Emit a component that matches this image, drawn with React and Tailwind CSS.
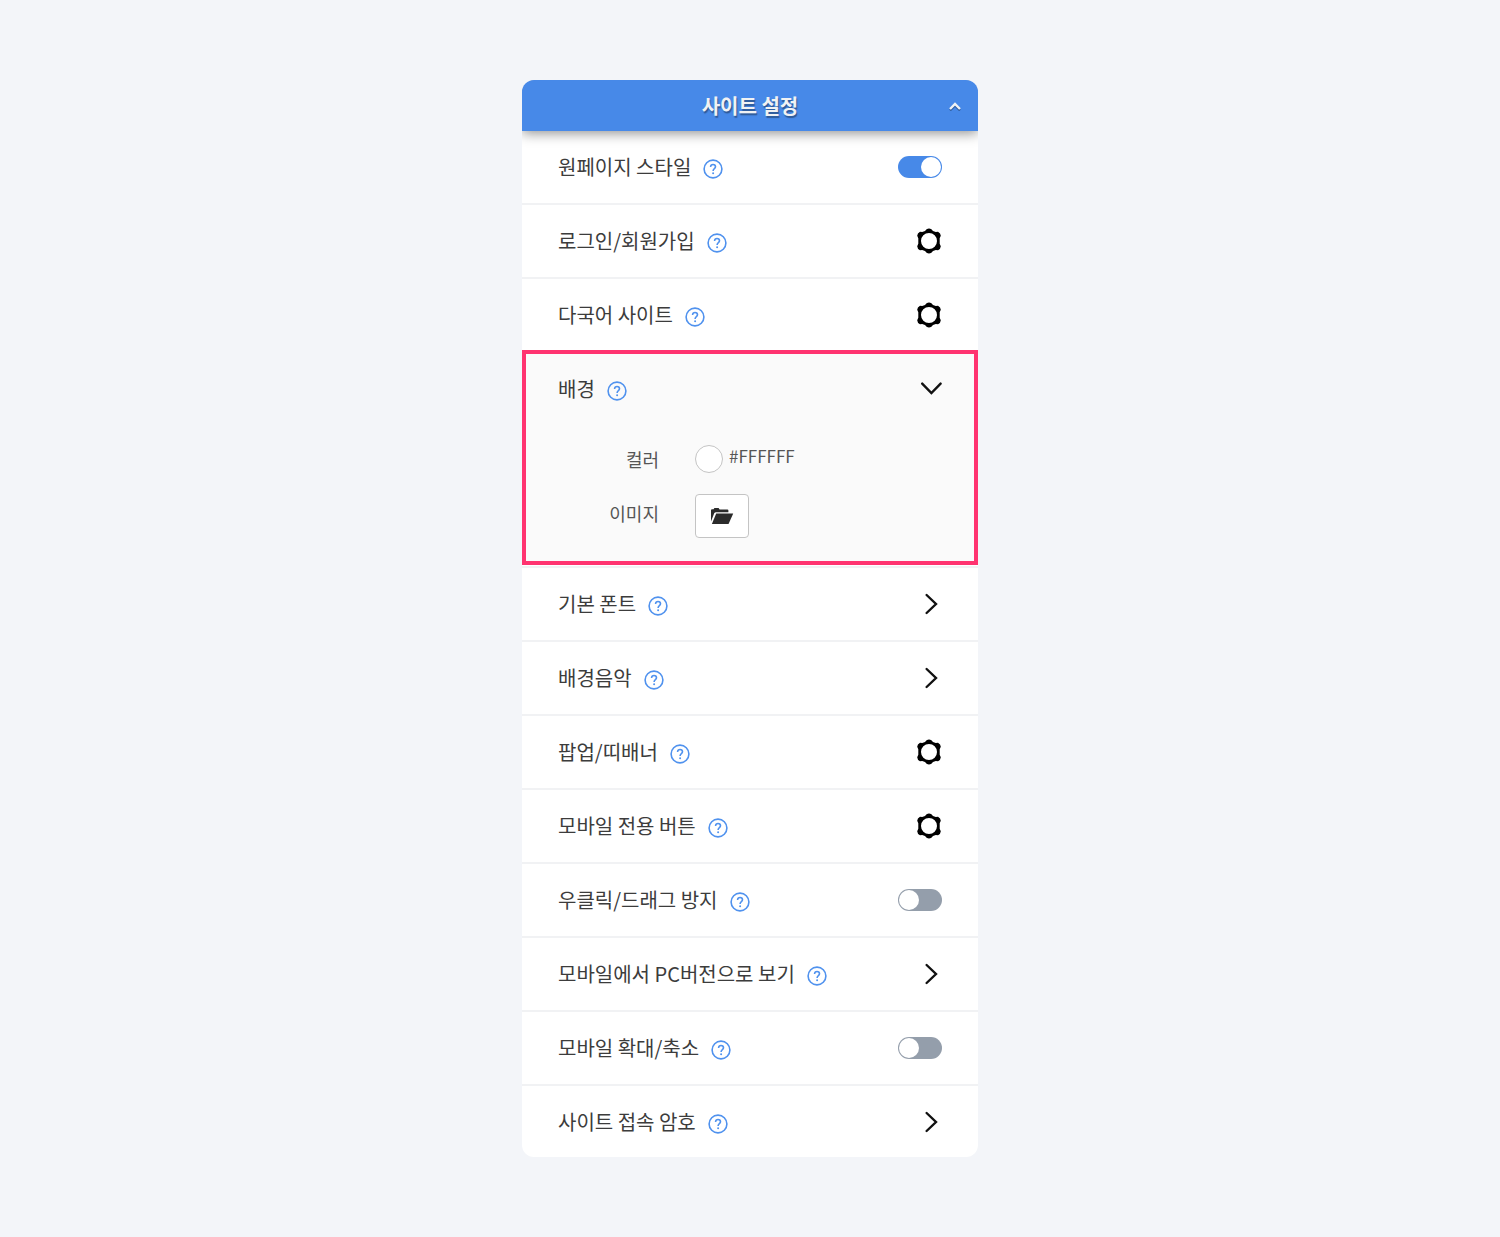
import React, { useState } from 'react';

const siteItems = [
  { id: 'onepage', label: '원페이지 스타일', type: 'toggle', on: true },
  { id: 'login', label: '로그인/회원가입', type: 'settings' },
  { id: 'language', label: '다국어 사이트', type: 'settings' },
];

const moreItems = [
  { id: 'font', label: '기본 폰트', type: 'link' },
  { id: 'music', label: '배경음악', type: 'link' },
  { id: 'popup', label: '팝업/띠배너', type: 'settings' },
  { id: 'mobile-button', label: '모바일 전용 버튼', type: 'settings' },
  { id: 'right-click', label: '우클릭/드래그 방지', type: 'toggle', on: false },
  { id: 'pc-version', label: '모바일에서 PC버전으로 보기', type: 'link' },
  { id: 'zoom', label: '모바일 확대/축소', type: 'toggle', on: false },
  { id: 'password', label: '사이트 접속 암호', type: 'link' },
];

const GearIcon = () => (
  <svg width="26" height="26" viewBox="-13 -13 26 26" aria-hidden="true">
    <path
      fillRule="evenodd"
      d="M-2.4-11.8Q0-13 2.4-11.8L4-10 6.8-9 9-9.3Q11.7-7.8 11.8-5.2L10.7-2.8V2.8L11.8 5.2Q11.7 7.8 9 9.3L6.8 9 4 10 2.4 11.8Q0 13-2.4 11.8L-4 10-6.8 9-9 9.3Q-11.7 7.8-11.8 5.2L-10.7 2.8V-2.8L-11.8-5.2Q-11.7-7.8-9-9.3L-6.8-9-4-10ZM0-8A8 8 0 1 0 0 8 8 8 0 1 0 0-8Z"
    />
  </svg>
);

const ChevronRight = () => (
  <svg width="22" height="22" viewBox="0 0 22 22" fill="none" stroke="#111" strokeWidth="2.4" aria-hidden="true">
    <path d="M6.6 2 16 11 6.6 20" strokeLinecap="round" />
  </svg>
);

const ChevronDown = () => (
  <svg width="22" height="22" viewBox="0 0 22 22" fill="none" stroke="#111" strokeWidth="2.4" aria-hidden="true">
    <path d="M2.2 5.6 11.4 15 20.6 5.6" strokeLinecap="round" />
  </svg>
);

const FolderIcon = () => (
  <svg width="24" height="18" viewBox="0 0 24 18" fill="#2b2b2b" aria-hidden="true">
    <path d="M1 14.5V3.2Q1 2.2 2 2.2H3.6L4.4 1H8.6L9.6 2.4H17.4Q18.4 2.4 18.4 3.4V5.2H6Q4.8 5.2 4.2 6.2Z" />
    <path d="M6.2 6.4H23.2L18.8 16.4Q18.5 17 17.8 17H1.9Z" />
  </svg>
);

const HelpButton = ({ label }) => (
  <button type="button" aria-label={`${label} 도움말`} className="mt-1 ml-3 text-[#5092ee]">
    <svg width="20" height="20" viewBox="0 0 20 20" fill="none" stroke="currentColor" strokeWidth="1.6" aria-hidden="true">
      <circle cx="10" cy="10" r="8.9" />
      <path d="M7.6 8.1C7.6 6.4 8.6 5.5 10 5.5S12.5 6.4 12.5 7.8C12.5 9.6 10.1 9.7 10.1 11.9" />
      <circle cx="10.1" cy="14.2" r="1" fill="currentColor" stroke="none" />
    </svg>
  </button>
);

const SettingRow = ({ item, last }) => {
  const [on, setOn] = useState(!!item.on);

  return (
    <li className={`flex items-center px-9 ${last ? 'h-[71px]' : 'h-[74px] border-b-2 border-[#f1f2f4]'}`}>
      <label htmlFor={item.id}>{item.label}</label>
      <HelpButton label={item.label} />
      {item.type === 'toggle' && (
        <input
          id={item.id}
          type="checkbox"
          role="switch"
          checked={on}
          onChange={(e) => setOn(e.target.checked)}
          className="ml-auto flex h-[22px] w-11 cursor-pointer appearance-none items-center rounded-full bg-[#949eab] p-px before:h-5 before:w-5 before:rounded-full before:bg-white checked:justify-end checked:bg-[#4789e8]"
        />
      )}
      {item.type === 'settings' && (
        <button id={item.id} type="button" className="ml-auto">
          <GearIcon />
        </button>
      )}
      {item.type === 'link' && (
        <button id={item.id} type="button" className="ml-auto">
          <ChevronRight />
        </button>
      )}
    </li>
  );
};

const App = () => {
  return (
    <div className="min-h-screen bg-[#f3f5f9] py-20 font-['Noto_Sans_CJK_KR',sans-serif] text-[20px] leading-7 text-[#3c3c3c]">
      <main className="mx-auto w-full max-w-[456px] overflow-hidden rounded-xl bg-white">
        <header className="relative flex h-[51px] items-center justify-center bg-[#4789e8] shadow-[0_2px_12px_rgba(0,0,0,0.45)]">
          <h1 className="text-[20px] font-bold text-[#f0f2f4] [text-shadow:1px_2px_1px_rgba(0,0,0,0.35)]">사이트 설정</h1>
          <button type="button" aria-label="접기" className="absolute right-4 text-[#f0f2f4]">
            <svg width="14" height="10" viewBox="0 0 14 10" fill="none" strokeWidth="2.3" aria-hidden="true">
              <path d="M2 9.5 7 4.5 12 9.5" stroke="#000" strokeOpacity="0.3" />
              <path d="M2 8 7 3 12 8" stroke="currentColor" />
            </svg>
          </button>
        </header>

        <ul>
          {siteItems.map((item, i) => (
            <SettingRow key={item.id} item={item} last={i === siteItems.length - 1} />
          ))}
        </ul>

        <div className="border-b-2 border-[#f1f2f4] pb-px">
          <section className="border-4 border-[#ff3370] bg-[#fafafa] px-8 pb-[23px]">
            <div className="flex h-[70px] items-center">
              <h2>배경</h2>
              <HelpButton label="배경" />
              <button type="button" aria-label="배경 접기" className="ml-auto">
                <ChevronDown />
              </button>
            </div>
            <div className="grid grid-cols-[101px_1fr] items-center gap-x-9 text-[18px] text-[#555]">
              <label htmlFor="bg-color" className="text-right">컬러</label>
              <div className="flex h-[70px] items-center gap-1.5">
                <button id="bg-color" type="button" className="h-7 w-7 rounded-full border border-[#c4c4c4] bg-white" />
                <span className="pb-1.5 text-[17px]">#FFFFFF</span>
              </div>
              <label htmlFor="bg-image" className="pb-1.5 text-right">이미지</label>
              <button
                id="bg-image"
                type="button"
                className="flex h-11 w-[54px] items-center justify-center rounded-sm border border-[#c4c4c4] bg-white"
              >
                <FolderIcon />
              </button>
            </div>
          </section>
        </div>

        <ul>
          {moreItems.map((item, i) => (
            <SettingRow key={item.id} item={item} last={i === moreItems.length - 1} />
          ))}
        </ul>
      </main>
    </div>
  );
};

export default App;
